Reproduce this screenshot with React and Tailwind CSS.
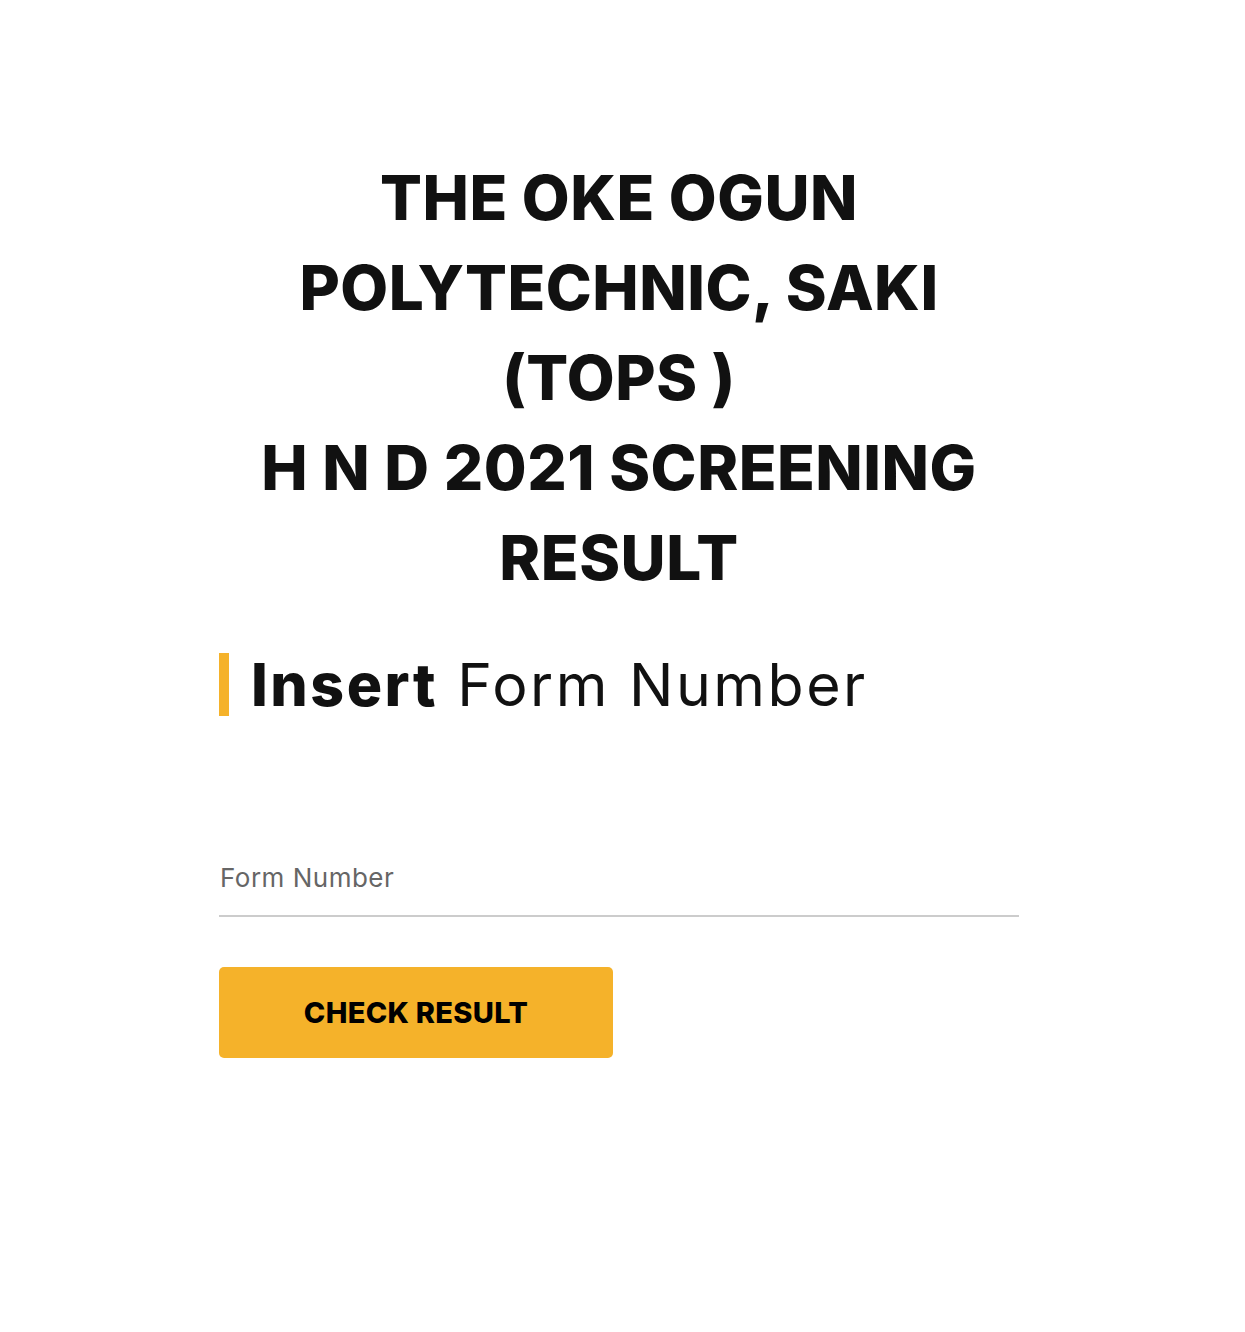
export default function App() {
  const font = { fontFamily: 'Inter, "Noto Sans", sans-serif' };
  return (
    <div className="min-h-[1332px] bg-white text-[#111]" style={font}>
      <div className="w-[800px] ml-[219px] pt-[153px]">
        <h1 className="text-center font-extrabold text-[62px] leading-[90px] tracking-[0.5px]">
          THE OKE OGUN
          <br />
          POLYTECHNIC, SAKI
          <br />
          (TOPS )
          <br />H N D 2021 SCREENING
          <br />
          RESULT
        </h1>
        <div className="mt-[50px] flex items-center h-[63px] border-l-[10px] border-[#f5b22a] pl-[22px]">
          <span className="text-[59px] leading-none tracking-[2.5px]">
            <span className="font-extrabold">Insert</span> Form Number
          </span>
        </div>
        <div className="mt-[146px] border-b-2 border-[#cccccc] pb-[21px]">
          <div className="text-[26px] leading-[32px] text-[#666] pl-[1px] tracking-[0.5px]">Form Number</div>
        </div>
        <button className="mt-[50px] w-[394px] h-[91px] rounded-[5px] bg-[#f5b22a] text-[29px] font-extrabold text-black tracking-[0.3px]">
          CHECK RESULT
        </button>
      </div>
    </div>
  );
}
